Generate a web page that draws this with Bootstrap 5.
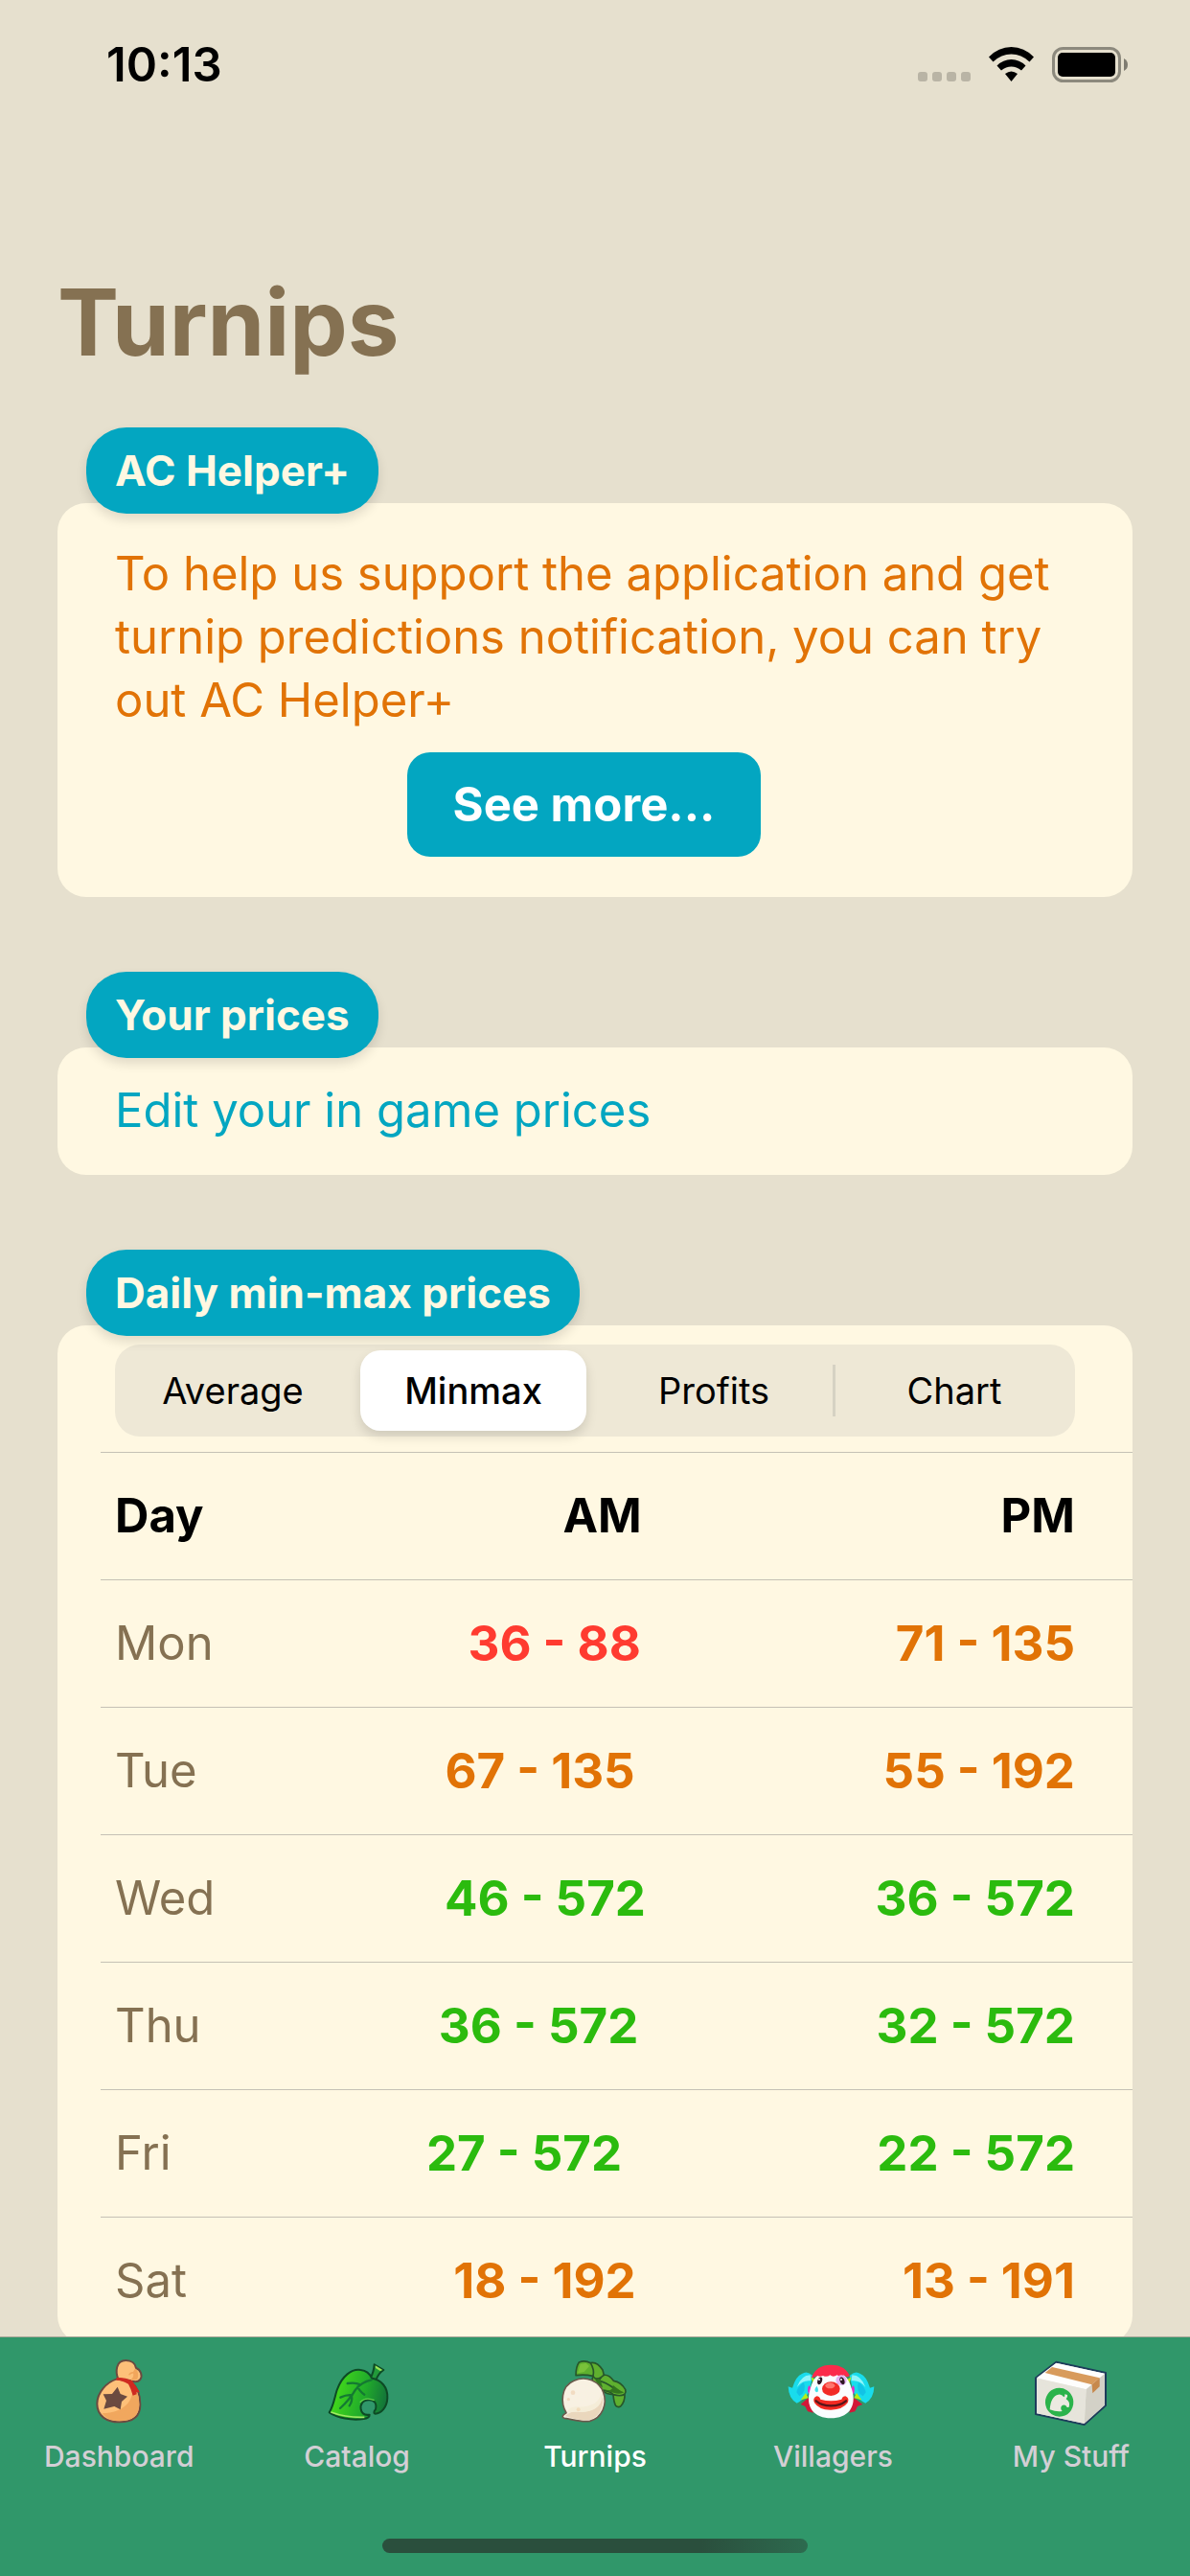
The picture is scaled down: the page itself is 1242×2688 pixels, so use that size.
<!DOCTYPE html>
<html lang="en">
<head>
<meta charset="utf-8">
<meta name="viewport" content="width=device-width, initial-scale=1">
<title>Turnips</title>
<link href="https://cdn.jsdelivr.net/npm/bootstrap@5.3.0/dist/css/bootstrap.min.css" rel="stylesheet">
<style>
  :root { --sand:#e6e0ce; --cream:#fff8e2; --teal:#03a6c1; --brown:#857152; --orange:#e17306; --leaf:#2bbb0e; --coral:#ff3b30; --bar:#30976a; }
  body { background:var(--sand); color:#000; font-family:Inter,"Noto Sans",sans-serif; font-size:49px; line-height:66px; min-height:100vh; }
  .status-bar { height:135px; padding:0 65px 0 111px; font-size:49px; font-weight:600; line-height:60px; }
  .status-icons { gap:19px; }
  main { padding:141px 60px 242px; }
  h1 { color:var(--brown); font-size:96px; font-weight:700; line-height:120px; margin:0 0 50px; }
  section + section { margin-top:78px; }
  .pill { display:table; position:relative; z-index:1; margin:0 0 -11px 30px; padding:0 30px; border-radius:42px; background:var(--teal); color:var(--cream); font-size:44px; font-weight:700; line-height:90px; box-shadow:0 6px 12px rgba(0,0,0,.12); }
  .panel { background:var(--cream); border-radius:30px; overflow:hidden; }
  .promo { padding:41px 83px 42px 60px; }
  .promo p { color:var(--orange); margin:0 0 21px; }
  .btn-more { --bs-btn-color:#fff; --bs-btn-bg:var(--teal); --bs-btn-hover-color:#fff; --bs-btn-hover-bg:#0295ad; --bs-btn-border-width:0; --bs-btn-border-radius:24px; --bs-btn-font-size:49px; --bs-btn-font-weight:700; --bs-btn-line-height:109px; --bs-btn-padding-y:0; --bs-btn-padding-x:48px; }
  .edit-link { display:block; padding:33px 60px 34px; color:var(--teal); text-decoration:none; }
  .segments { height:96px; margin:20px 60px 16px; padding:6px 8px 6px 5px; border-radius:26px; background:#eee8d6; font-size:38px; font-weight:400; }
  .segments label { flex:1 1 0; text-align:center; line-height:84px; border-radius:21px; cursor:pointer; }
  .segments :checked + label { background:#fff; font-weight:500; box-shadow:0 6px 12px rgba(0,0,0,.13); }
  .segments .gapline { width:15px; height:54px; }
  .segments .gapline.shown { background:linear-gradient(#d6d2c3,#d6d2c3) center/3px 100% no-repeat; }
  .prices { display:block; margin-left:45px; }
  .prices thead, .prices tbody { display:block; }
  .prices tr { display:flex; justify-content:space-between; border-top:1px solid #c5c1b5; padding:33px 60px 33px 15px; }
  .prices th, .prices td { padding:0; }
  .prices thead th { font-weight:700; }
  .prices td { font-size:51px; font-weight:700; }
  .prices tbody th { font-weight:400; color:var(--brown); }
  .prices .low { color:var(--coral); }
  .prices .mid { color:var(--orange); }
  .prices .high { color:var(--leaf); }
  .tab-bar { background:var(--bar); border-top:1px solid #a5a596; padding:20px 0 24px; z-index:5; }
  .tab-bar a { flex:1 1 0; color:#d3cfd5; text-decoration:none; font-size:30px; font-weight:500; line-height:36px; text-align:center; }
  .tab-bar a.active { color:#fff; }
  .tab-bar svg { display:block; width:96px; height:72px; margin:0 auto 14px; }
  .home-line { width:444px; height:15px; margin:68px auto 0; border-radius:8px; background:linear-gradient(95deg,#2a4f3d 75%,#2d6b4f); }
</style>
<script src="https://cdn.jsdelivr.net/npm/bootstrap@5.3.0/dist/js/bootstrap.bundle.min.js"></script>
</head>
<body>
<header class="status-bar d-flex justify-content-between align-items-center">
  <span>10:13</span>
  <div class="status-icons d-flex">
    <svg width="55" height="37" viewBox="0 0 55 37" fill="#b9b4a5" aria-hidden="true"><rect y="26" width="10" height="10" rx="3"/><rect x="15" y="26" width="10" height="10" rx="3"/><rect x="30" y="26" width="10" height="10" rx="3"/><rect x="45" y="26" width="10" height="10" rx="3"/></svg>
    <svg width="47" height="37" viewBox="0 0 47 37" aria-hidden="true"><path d="M0 10.500Q10 0 23.500 0T47 10.500L42.500 15.500Q34 7.500 23.500 7.500T4.500 15.500Z"/><path d="M8.500 19.500Q15 13 23.500 13T38.500 19.500L34 24.500Q29 20.500 23.500 20.500T13 24.500Z"/><path d="M17 28Q23.500 23 30 28L23.500 36Z"/></svg>
    <svg width="79" height="37" viewBox="0 0 79 37" aria-hidden="true"><rect x="1.500" y="1.500" width="69" height="34" rx="10" fill="none" stroke="#8c897d" stroke-width="3"/><rect x="6" y="6" width="60" height="25" rx="5"/><path d="M75 12Q79 14 79 18.500T75 25Z" fill="#7f7c71"/></svg>
  </div>
</header>
<main>
  <h1>Turnips</h1>
  <section>
    <h2 class="pill">AC Helper+</h2>
    <div class="panel promo">
      <p>To help us support the application and get turnip predictions notification, you can try out AC Helper+</p>
      <div class="d-flex justify-content-center"><button type="button" class="btn btn-more">See more...</button></div>
    </div>
  </section>
  <section>
    <h2 class="pill">Your prices</h2>
    <div class="panel"><a class="edit-link" href="#edit">Edit your in game prices</a></div>
  </section>
  <section>
    <h2 class="pill">Daily min-max prices</h2>
    <div class="panel">
      <div class="segments d-flex align-items-center" role="radiogroup" aria-label="Display">
        <input class="btn-check" type="radio" name="display" id="seg-average"><label for="seg-average">Average</label>
        <span class="gapline"></span>
        <input class="btn-check" type="radio" name="display" id="seg-minmax" checked><label for="seg-minmax">Minmax</label>
        <span class="gapline"></span>
        <input class="btn-check" type="radio" name="display" id="seg-profits"><label for="seg-profits">Profits</label>
        <span class="gapline shown"></span>
        <input class="btn-check" type="radio" name="display" id="seg-chart"><label for="seg-chart">Chart</label>
      </div>
      <table class="prices">
        <thead><tr><th>Day</th><th>AM</th><th>PM</th></tr></thead>
        <tbody>
          <tr><th scope="row">Mon</th><td class="low">36 - 88</td><td class="mid">71 - 135</td></tr>
          <tr><th scope="row">Tue</th><td class="mid">67 - 135</td><td class="mid">55 - 192</td></tr>
          <tr><th scope="row">Wed</th><td class="high">46 - 572</td><td class="high">36 - 572</td></tr>
          <tr><th scope="row">Thu</th><td class="high">36 - 572</td><td class="high">32 - 572</td></tr>
          <tr><th scope="row">Fri</th><td class="high">27 - 572</td><td class="high">22 - 572</td></tr>
          <tr><th scope="row">Sat</th><td class="mid">18 - 192</td><td class="mid">13 - 191</td></tr>
        </tbody>
      </table>
    </div>
  </section>
</main>
<nav class="tab-bar fixed-bottom" aria-label="Main">
  <div class="d-flex">
    <a href="#dashboard">
      <svg viewBox="0 0 288 216" aria-hidden="true" stroke-linejoin="round">
        <path d="M142 70C133 48 134 12 166 12C186 12 196 24 198 36C213 42 219 60 211 72C204 80 194 80 184 76Z" fill="#fec079" stroke="#6b4a40" stroke-width="6"/>
        <path d="M176 58Q180 48 192 50M196 40Q207 52 200 70L184 73Q196 62 190 50Z" fill="#f2a65c" stroke="#f2a65c" stroke-width="4"/>
        <path d="M138 70C106 80 76 112 76 148C76 188 108 205 146 205C188 205 211 186 211 150C211 118 200 92 180 78Z" fill="#fec079" stroke="#6b4a40" stroke-width="6"/>
        <path d="M186 88C194 140 160 176 92 178C106 198 128 202 146 202C186 202 208 184 208 150C208 122 200 104 186 88Z" fill="#f1a75e"/>
        <path d="M137 66Q165 65 186 76L210 112L199 112L200 118L188 122Q182 100 174 86Q154 74 136 74Z" fill="#cf2a20"/>
        <path d="M140 95L149 117L171 125L153 141L149 166L130 156L97 164L105 138L95 118L123 117Z" fill="#6b4a40"/>
      </svg>
      Dashboard</a>
    <a href="#catalog">
      <svg viewBox="0 0 288 216" aria-hidden="true" stroke-linejoin="round">
        <defs><linearGradient id="leafFill" x1="0" y1=".4" x2="1" y2=".6"><stop offset=".15" stop-color="#3fd41c"/><stop offset=".6" stop-color="#21ab2b"/><stop offset="1" stop-color="#12713a"/></linearGradient></defs>
        <path d="M185 66Q195 50 197 25L226 42Q208 54 202 75Z" fill="#22993a" stroke="#0d4a25" stroke-width="6"/>
        <path d="M200 28L223 42L215 45L201 36Z" fill="#9be455"/>
        <path d="M56 175C70 152 73 126 80 105C96 60 126 38 154 42C172 44 184 56 189 68C218 72 240 96 238 130C237 160 218 178 200 179C194 178 196 170 201 166C206 144 196 136 180 136C160 136 152 150 155 166C158 180 170 184 182 182C183 190 174 194 164 195C125 201 82 192 56 175Z" fill="url(#leafFill)" stroke="#0d4a25" stroke-width="6"/>
        <path d="M61 174Q110 192 166 190" fill="none" stroke="#a1ea63" stroke-width="5"/>
        <path d="M152 143Q170 125 197 137" fill="none" stroke="#62d24a" stroke-width="4"/>
        <path d="M90 162Q120 135 138 104Q156 80 188 73M113 84Q139 80 152 88M91 128Q112 118 128 121M119 154Q129 140 126 123M166 119Q150 108 145 95" fill="none" stroke="#147a32" stroke-width="7" stroke-linecap="round"/>
      </svg>
      Catalog</a>
    <a href="#turnips" class="active" aria-current="page">
      <svg viewBox="0 0 288 216" aria-hidden="true" stroke-linejoin="round">
        <g stroke="#27562a" stroke-width="5">
          <path d="M136 78Q134 70 138 61Q110 55 84 59Q84 32 94 18Q112 10 130 20Q150 15 168 42L172 58Q188 56 202 76Q226 80 239 103Q242 112 237 118Q238 142 224 156Q216 160 209 154Q203 144 201 119Q180 118 166 106Z" fill="#5fb02f"/>
          <path d="M138 61Q143 42 130 20M138 61Q146 76 164 64M172 58Q164 62 156 76Q178 80 204 100M201 119Q188 106 166 106M201 119Q224 126 237 118" fill="none"/>
        </g>
        <path d="M140 65Q148 76 160 70L168 97L154 88ZM165 103L190 106Q202 100 200 89Q220 106 235 112Q222 120 202 113Z" fill="#32741e"/>
        <path d="M98 24L116 21L126 30L110 48L90 52Z" fill="#79c23a"/>
        <path d="M54 176C36 146 36 94 78 76C116 58 158 78 170 112C184 150 166 192 128 202C102 207 76 197 48 193C39 190 42 183 54 176Z" fill="#f8f1e2" stroke="#6a5a4c" stroke-width="5"/>
        <path d="M166 116C170 150 142 174 98 172C74 170 62 176 50 186C76 194 102 203 126 198C156 190 176 158 166 116Z" fill="#ead7bd"/>
        <path d="M163 112C160 146 130 160 86 157Q62 158 58 174L88 173C132 178 164 160 166 126Z" fill="#f5edd8"/>
        <circle cx="75" cy="113" r="7" fill="#f2dcc2"/><circle cx="61" cy="134" r="5" fill="#f2dcc2"/><circle cx="92" cy="166" r="6" fill="#f3dcbc"/>
      </svg>
      Turnips</a>
    <a href="#villagers">
      <svg viewBox="0 0 288 216" aria-hidden="true">
        <path d="M68 128L44 150L58 156L66 172L84 176M210 128L238 150L222 156L214 172L196 176Z" fill="#d31838"/>
        <g id="hairSide">
          <path d="M82 60Q64 42 48 54Q30 60 18 98L5 94Q6 132 32 146Q54 136 70 112Z" fill="#19dcec"/>
          <path d="M74 58Q46 58 32 96Q50 72 76 76Z" fill="#8ff5fa"/>
          <path d="M31 112Q34 94 54 80Q64 110 40 124Z" fill="#12c3e6"/>
          <path d="M76 64L90 72L84 86ZM44 136L60 114L68 130Z" fill="#b5ee18"/>
          <path d="M70 90Q62 102 70 118L80 104Z" fill="#e52bc4"/>
        </g>
        <use href="#hairSide" transform="matrix(-1 0 0 1 279 0)"/>
        <path d="M139 45C180 45 196 72 204 102C222 160 190 193 139 193C88 193 56 160 74 102C82 72 98 45 139 45Z" fill="#fafdff"/>
        <path d="M78 66Q92 26 139 26T200 66L196 60Q188 68 180 58Q168 66 158 58Q146 66 136 58Q126 66 114 60Q104 64 96 60L84 66Z" fill="#fb2b4b"/>
        <ellipse cx="171" cy="74" rx="17" ry="16" fill="#e6b4f4"/>
        <ellipse cx="104" cy="76" rx="7" ry="12" transform="rotate(18 104 76)" fill="#2d1724"/><ellipse cx="174" cy="76" rx="7" ry="12" transform="rotate(-18 174 76)" fill="#2d1724"/>
        <circle cx="102" cy="72" r="3" fill="#fff"/><circle cx="171" cy="72" r="3" fill="#fff"/>
        <path d="M95 92Q82 106 94 112Q104 110 95 92Z" fill="#42e3ea"/>
        <ellipse cx="139" cy="101" rx="28" ry="22" fill="#f22b27"/><ellipse cx="136" cy="91" rx="15" ry="9" fill="#ff756d"/>
        <path d="M94 124Q80 130 87 145Q102 168 139 167T191 145Q198 130 184 124Q176 124 172 134Q139 144 106 134Q102 124 94 124Z" fill="#f32a22"/>
        <path d="M92 139Q110 154 139 154T186 139" fill="none" stroke="#57151a" stroke-width="7" stroke-linecap="round"/>
      </svg>
      Villagers</a>
    <a href="#my-stuff">
      <svg viewBox="0 0 288 216" aria-hidden="true" stroke-linejoin="round">
        <path d="M97 17L252 51V153L185 213L33 180V67Z" fill="#e9e7df" stroke="#1d3c5b" stroke-width="6"/>
        <path d="M97 20L249 53L191 103L36 67Z" fill="#fefefd"/>
        <path d="M191 103L249 54V152L185 210Z" fill="#d3d1c7"/>
        <path d="M36 68L191 103L185 210L36 178Z" fill="#e6e4db"/>
        <path d="M84 33L233 67L209 88L62 51Z" fill="#d89b5c"/><path d="M209 88L233 67V94L211 115Z" fill="#c7894c"/>
        <ellipse cx="107" cy="143" rx="44" ry="45" transform="rotate(-12 107 143)" fill="#2bb34b"/>
        <path d="M77 166Q80 124 104 119Q114 117 121 127Q125 125 124 118L132 120Q134 128 128 133Q142 142 137 158Q130 162 127 153Q117 148 112 158Q110 165 116 171Q98 174 77 166Z" fill="#eceae1"/>
      </svg>
      My Stuff</a>
  </div>
  <div class="home-line"></div>
</nav>
</body>
</html>
